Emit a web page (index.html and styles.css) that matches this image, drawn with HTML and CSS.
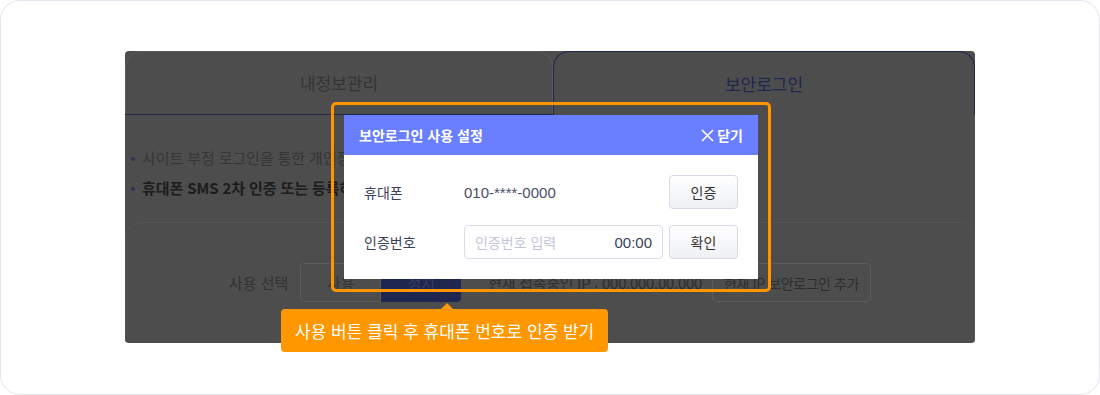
FILE: index.html
```html
<!DOCTYPE html>
<html lang="ko">
<head>
  <meta charset="UTF-8">
  <title>보안로그인 사용 설정</title>
  <link rel="stylesheet" href="styles.css">
</head>
<body>
  <div class="frame">
    <div class="screen">
      <div class="tabs">
        <div class="tab">내정보관리</div>
        <div class="tab active">보안로그인</div>
      </div>
      <ul class="notice">
        <li>사이트 부정 로그인을 통한 개인정보</li>
        <li class="strong">휴대폰 SMS 2차 인증 또는 등록하</li>
      </ul>
      <div class="setting">
        <div class="setting-row">
          <span class="label">사용 선택</span>
          <div class="toggle">
            <button class="opt">사용</button>
            <button class="opt on">정지</button>
          </div>
          <span class="ip">현재 접속중인 IP : 000.000.00.000</span>
          <button class="add-btn">현재 IP 보안로그인 추가</button>
        </div>
      </div>
    </div>

    <div class="highlight">
      <div class="modal">
        <div class="modal-head">
          <span class="modal-title">보안로그인 사용 설정</span>
          <span class="close">
            <svg width="13" height="13" viewBox="0 0 13 13"><path d="M1 1L12 12M12 1L1 12" stroke="#fff" stroke-width="1.6" fill="none"/></svg>
            닫기
          </span>
        </div>
        <div class="modal-body">
          <div class="m-row">
            <span class="m-label">휴대폰</span>
            <span class="m-value">010-****-0000</span>
            <button class="m-btn">인증</button>
          </div>
          <div class="m-row">
            <span class="m-label">인증번호</span>
            <div class="code-input">
              <span class="ph">인증번호 입력</span>
              <span class="timer">00:00</span>
            </div>
            <button class="m-btn">확인</button>
          </div>
        </div>
      </div>
    </div>

    <div class="tip">사용 버튼 클릭 후 휴대폰 번호로 인증 받기</div>
  </div>
</body>
</html>
```

FILE: styles.css
```css
* { box-sizing: border-box; }
body {margin: 0;background: #fff;font-family: "Noto Sans CJK KR", "Noto Sans", sans-serif;}
button {font-family: inherit;}
.frame {position: relative;width: 1100px;height: 395px;border: 1px solid #e4e4ee;border-radius: 20px;padding-top: 50px;overflow: hidden;}
.screen {width: 850px;height: 292px;margin: 0 auto;background: #4d4d4d;border-radius: 4px;overflow: hidden;}

.tabs {display: grid;grid-template-columns: 428px 1fr;height: 64px;border-bottom: 1px solid #1f2650;}
.tab {display: flex;align-items: center;justify-content: center;padding-bottom: 1px;font-size: 17px;color: #353535;border: 1px solid #5a5a5a;border-bottom: none;border-radius: 16px 16px 0 0;}
.tab.active {color: #1f2650;border-color: #1f2650;margin-bottom: -1px;background: #4d4d4d;}

.notice {list-style: none;margin: 0;padding: 28px 0 0 4px;}
.notice li {position: relative;padding-left: 13px;font-size: 15px;letter-spacing: -0.1px;line-height: 30px;color: #363636;white-space: nowrap;}
.notice li::before {content: "";position: absolute;left: 2px;top: 14px;width: 4px;height: 4px;border-radius: 50%;background: #2b3358;}
.notice li.strong {font-weight: bold;color: #1c1c1c;}

.setting {margin-top: 19px;height: 140px;border: 1px solid #555;border-radius: 16px;padding-top: 40px;}
.setting-row {display: flex;align-items: center;justify-content: center;}
.label {font-size: 15px;color: #333;margin-right: 12px;}
.toggle {display: flex;}
.opt {width: 81px;height: 39px;font-size: 15px;color: #333;background: #4d4d4d;border: 1px solid #5c5c5c;border-radius: 4px 0 0 4px;}
.opt.on {width: 80px;background: #1f2650;border-color: #1f2650;color: #3a3f60;border-radius: 0 4px 4px 0;}
.ip {font-size: 15px;letter-spacing: -0.3px;color: #2e2e2e;margin: 0 10px 0 27px;}
.add-btn {height: 39px;padding: 0 11px;font-size: 14px;letter-spacing: -0.4px;color: #2e2e2e;background: #4d4d4d;border: 1px solid #5c5c5c;border-radius: 4px;}

.highlight {position: absolute;left: 330px;top: 101px;width: 440px;padding: 10px;border: 3px solid #ff9500;border-radius: 5px;}
.modal {background: #fff;}
.modal-head {display: flex;align-items: center;justify-content: space-between;height: 40px;padding: 0 15px;background: #6a7fff;color: #fff;}
.modal-title {font-size: 14px;font-weight: bold;}
.close {display: flex;align-items: center;gap: 3px;font-size: 14px;font-weight: bold;}
.modal-body {padding: 20px 20px 20px;display: flex;flex-direction: column;gap: 16px;}
.m-row {display: flex;align-items: center;height: 34px;}
.m-label {width: 100px;font-size: 14px;color: #3b3f5a;}
.m-value {flex: 1;font-size: 15px;color: #4a4e68;font-family: "Liberation Sans", sans-serif;}
.code-input {flex: 1;height: 34px;display: flex;align-items: center;justify-content: space-between;padding: 0 10px;border: 1px solid #dcdcea;border-radius: 4px;font-size: 14px;margin-right: 6px;}
.ph {color: #c4c6dc;}
.timer {color: #3b3f5a;font-size: 15px;font-family: "Liberation Sans", sans-serif;}
.m-btn {width: 69px;height: 34px;font-size: 14px;color: #333;background: linear-gradient(#fff, #eef0f4);border: 1px solid #d8d9e6;border-radius: 4px;}

.tip {position: absolute;left: 280px;top: 308px;height: 43px;padding: 0 14px;display: flex;align-items: center;background: #ff9800;color: #fff;font-size: 17px;border-radius: 4px;}
.tip::before {content: "";position: absolute;left: 160px;top: -6px;border-left: 6px solid transparent;border-right: 6px solid transparent;border-bottom: 6px solid #ff9800;}
```
